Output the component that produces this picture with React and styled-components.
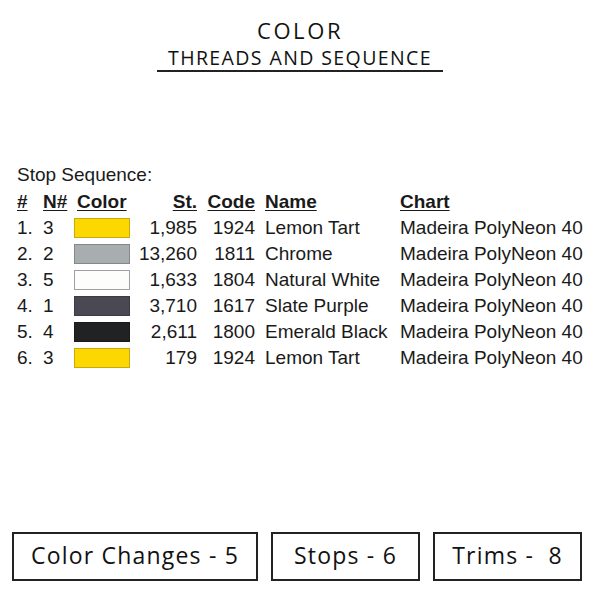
import { Fragment } from "react";
import styled, { createGlobalStyle } from "styled-components";

const GlobalStyle = createGlobalStyle`
  html, body {
    margin: 0;
    padding: 0;
    background: #fff;
  }
`;

const Page = styled.div`
  width: 600px;
  height: 600px;
  background: #fff;
  display: flex;
  flex-direction: column;
  color: #111;
`;

const TitleBlock = styled.div`
  display: flex;
  flex-direction: column;
  align-items: center;
  padding-top: 15px;
  font-family: "Open Sans", sans-serif;
`;

const Title = styled.div`
  font-size: 22px;
  line-height: 30px;
  letter-spacing: 2.6px;
  font-weight: 500;
`;

const Subtitle = styled.div`
  font-size: 19.5px;
  line-height: 25px;
  letter-spacing: 1.4px;
  border-bottom: 2px solid #222;
  width: 286px;
  text-align: center;
`;

const Section = styled.div`
  margin-top: 90px;
  padding-left: 17px;
  font-family: "Liberation Sans", Arial, sans-serif;
  font-size: 19px;
  color: #1a1a1a;
`;

const Caption = styled.div`
  line-height: 26px;
  margin-bottom: 1px;
`;

const Grid = styled.div`
  display: grid;
  grid-template-columns: 26px 31px 56px 67px 58px 145px auto;
  grid-auto-rows: 26px;
  align-items: center;
`;

const Head = styled.div`
  font-weight: bold;
  text-decoration: underline;
  text-underline-offset: 2px;
  text-align: ${(p) => (p.$right ? "right" : "left")};
  padding-left: ${(p) => p.$pad || 0}px;
  white-space: nowrap;
`;

const Cell = styled.div`
  text-align: ${(p) => (p.$right ? "right" : "left")};
  padding-left: ${(p) => p.$pad || 0}px;
  white-space: nowrap;
`;

const Swatch = styled.div`
  width: 56px;
  height: 20px;
  box-sizing: border-box;
  background: ${(p) => p.$fill};
  border: 1px solid ${(p) => p.$edge};
`;

const Footer = styled.div`
  margin-top: auto;
  margin-bottom: 19px;
  display: flex;
  gap: 13px;
  padding-left: 12px;
  font-family: "Open Sans", sans-serif;
`;

const StatBox = styled.div`
  width: ${(p) => p.$w}px;
  height: 49px;
  box-sizing: border-box;
  border: 2px solid #222;
  display: flex;
  align-items: center;
  justify-content: center;
  padding-bottom: 3px;
  font-size: 23px;
  letter-spacing: 1.2px;
  white-space: pre;
`;

const rows = [
  { n: 3, fill: "#fcd800", edge: "#c8aa10", st: "1,985", code: "1924", name: "Lemon Tart" },
  { n: 2, fill: "#a8aeb0", edge: "#83898b", st: "13,260", code: "1811", name: "Chrome" },
  { n: 5, fill: "#fdfdfc", edge: "#a0a0a0", st: "1,633", code: "1804", name: "Natural White" },
  { n: 1, fill: "#4a4853", edge: "#3c3a44", st: "3,710", code: "1617", name: "Slate Purple" },
  { n: 4, fill: "#202223", edge: "#1a1a1b", st: "2,611", code: "1800", name: "Emerald Black" },
  { n: 3, fill: "#fcd800", edge: "#c8aa10", st: "179", code: "1924", name: "Lemon Tart" },
];

export default function App() {
  return (
    <Page>
      <GlobalStyle />
      <TitleBlock>
        <Title>COLOR</Title>
        <Subtitle>THREADS AND SEQUENCE</Subtitle>
      </TitleBlock>

      <Section>
        <Caption>Stop Sequence:</Caption>
        <Grid>
          <Head>#</Head>
          <Head>N#</Head>
          <Head $pad={3}>Color</Head>
          <Head $right>St.</Head>
          <Head $right>Code</Head>
          <Head $pad={10}>Name</Head>
          <Head>Chart</Head>
          {rows.map((r, i) => (
            <Fragment key={i}>
              <Cell>{i + 1}.</Cell>
              <Cell>{r.n}</Cell>
              <Swatch $fill={r.fill} $edge={r.edge} />
              <Cell $right>{r.st}</Cell>
              <Cell $right>{r.code}</Cell>
              <Cell $pad={10}>{r.name}</Cell>
              <Cell>Madeira PolyNeon 40</Cell>
            </Fragment>
          ))}
        </Grid>
      </Section>

      <Footer>
        <StatBox $w={246}>Color Changes - 5</StatBox>
        <StatBox $w={149}>Stops - 6</StatBox>
        <StatBox $w={149}>{"Trims -  8"}</StatBox>
      </Footer>
    </Page>
  );
}
